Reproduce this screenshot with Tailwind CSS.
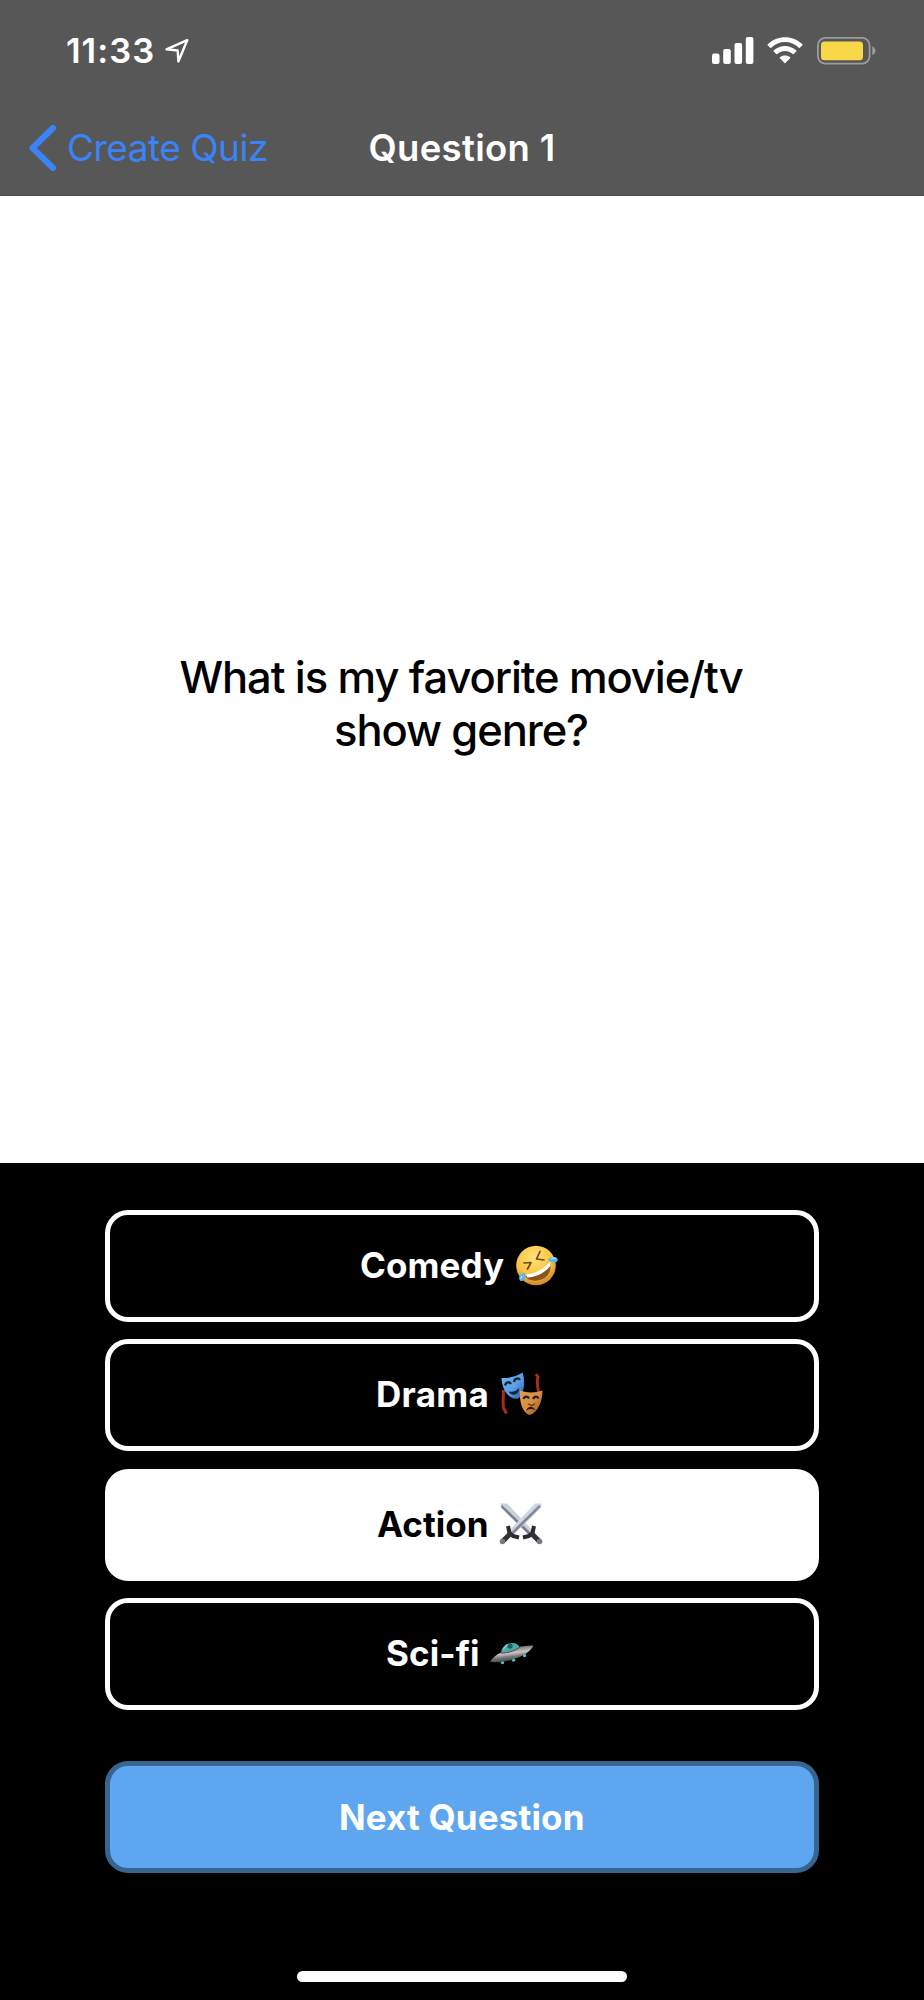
<!DOCTYPE html>
<html lang="en">
<head>
<meta charset="utf-8">
<title>Question 1</title>
<script src="https://cdn.jsdelivr.net/npm/@tailwindcss/browser@4"></script>
</head>
<body class="w-[924px] h-[2000px] overflow-hidden bg-black font-['Inter',sans-serif] text-white flex flex-col">
  <header class="h-[196px] shrink-0 bg-[#575757] border-b border-[#4b4b4b] flex flex-col">
    <div class="h-[101px] flex items-center justify-between pl-[66px] pr-[48px]">
      <div class="flex items-center gap-[11px]">
        <span class="w-[88px] whitespace-nowrap text-[34.5px] leading-[42px] font-semibold tracking-[1px]">11:33</span>
        <svg width="24" height="24" viewBox="0 0 24 24" fill="none" stroke="white" stroke-width="2.4" stroke-linejoin="round"><path d="M22.2 1.2 1.5 10.3 12.7 11.5 13.4 22.5Z"/></svg>
      </div>
      <div class="flex items-center">
        <svg width="42" height="28" viewBox="0 0 42 28" fill="white"><rect x="0" y="16.5" width="7.5" height="10.5" rx="2"/><rect x="11.2" y="12" width="7.6" height="15" rx="2"/><rect x="22.5" y="6" width="7.6" height="21" rx="2"/><rect x="33.8" y="0" width="7.6" height="27" rx="2"/></svg>
        <svg class="ml-[13px]" width="36" height="28" viewBox="0 0 36 28" fill="white"><path d="M.7 7.3C10.3-2.2 25.8-2.2 35.4 7.3q.5.5 0 1l-2.5 2.5q-.5.5-1 0C24 3.200 12 3.200 4.200 10.800q-.5.5-1 0L.7 8.300q-.5-.5 0-1Z"/><path d="M6.700 13.500c6.500-6 16-6 22.600 0q.5.5 0 1l-2.600 2.600q-.5.5-1 0c-4.400-4-11-4-15.400 0q-.5.500-1 0l-2.600-2.600q-.5-.5 0-1Z"/><path d="M12.900 20.200c3-2.400 7.200-2.400 10.200 0q.5.5 0 1l-4.600 4.900q-.5.500-1 0l-4.600-4.900q-.5-.5 0-1Z"/></svg>
        <svg class="ml-[14px]" width="59" height="28" viewBox="0 0 59 28"><rect x=".9" y=".9" width="51.700" height="25.800" rx="7.500" fill="none" stroke="#9c9c9c" stroke-width="1.800"/><rect x="4" y="4.500" width="42" height="18.800" rx="3.500" fill="#f8d748"/><path d="M55.300 9.300c4.200 2 4.200 7 0 9Z" fill="#9c9c9c"/></svg>
      </div>
    </div>
    <nav class="h-[94px] flex items-center">
      <div class="w-[342px] h-full pl-[28px] flex items-center text-[#3a84f8]">
        <svg width="29" height="48" viewBox="0 0 29 48" fill="none" stroke="currentColor" stroke-width="6" stroke-linecap="round" stroke-linejoin="round"><path d="M25 4 4.500 24 25 44"/></svg>
        <span class="ml-[10px] whitespace-nowrap text-[37px] leading-[46px] tracking-[-0.5px]">Create Quiz</span>
      </div>
      <h1 class="w-[240px] text-center whitespace-nowrap text-[36.5px] leading-[46px] font-semibold tracking-[0.3px]">Question 1</h1>
    </nav>
  </header>

  <main class="h-[967px] shrink-0 bg-white text-black flex items-center justify-center pt-[48px]">
    <p class="w-[600px] -ml-[2px] text-center text-[43.5px] leading-[53px] font-medium tracking-[-1.1px]">What is my favorite movie/tv<br>show genre?</p>
  </main>

  <section class="pt-[46.500px] pl-[105px] flex flex-col text-[35px] leading-[44px] font-bold">
    <div class="flex flex-col gap-[17.500px]">
      <button class="w-[713.500px] h-[112px] rounded-[23px] border-[5px] border-white flex items-center pl-[250px]">
        <span class="w-[146px] pb-[2px] text-left whitespace-nowrap tracking-[0.1px]">Comedy</span>
        <svg class="ml-[7px]" width="48" height="48" viewBox="0 0 48 48">
          <defs><radialGradient id="face" cx=".45" cy=".3" r=".75"><stop offset="0" stop-color="#ffe476"/><stop offset=".6" stop-color="#f7c247"/><stop offset="1" stop-color="#c97d22"/></radialGradient></defs>
          <circle cx="23" cy="23.500" r="19.800" fill="url(#face)"/>
          <path d="M12.500 34C22 33.500 31 28 37 21.500c2 8-3 15-10.500 16.600C20.500 39.500 14.500 38.500 12.500 34Z" fill="#8b551c"/>
          <path d="M13 32.500C22 32 31 27 36.800 20l.7 3.700C32 30.500 24 35 14.500 35.500Z" fill="#fff"/>
          <path d="m11 21 7-.5-3.500 6.500M27 9.500l-3.500 7.500 7.500 1" fill="none" stroke="#754413" stroke-width="1.700" stroke-linecap="round" stroke-linejoin="round"/>
          <path d="M35 18c2-4 8.500-3.500 9.700-1 .8 3.500-4.500 5.500-9.700 1ZM12 31c-4-.5-7.500 4.500-5 7.500 3 2 6.500-2 5-7.500Z" fill="#58b8ee"/>
          <path d="M38 17.200c2-1.500 4-1.300 5-.5M9 34c-1 1-1.300 2-1.100 3" stroke="#a7e2ff" stroke-width="1.300" fill="none"/>
        </svg>
      </button>
      <button class="w-[713.500px] h-[112px] rounded-[23px] border-[5px] border-white flex items-center pl-[266px]">
        <span class="w-[116px] pb-[2px] text-left whitespace-nowrap tracking-[0.3px]">Drama</span>
        <svg class="ml-[7px] -mt-[2px]" width="48" height="48" viewBox="0 0 48 48">
          <defs><linearGradient id="blue" x2="1" y2="1"><stop offset="0" stop-color="#6eb7f5"/><stop offset=".55" stop-color="#5a9fe8"/><stop offset="1" stop-color="#28579e"/></linearGradient><linearGradient id="gold" x2="1" y2="1"><stop offset="0" stop-color="#e89a4e"/><stop offset=".5" stop-color="#d98e40"/><stop offset="1" stop-color="#8a4e18"/></linearGradient></defs>
          <path d="M4.500 20c0 6-1 12 0 18l3 5.500M37 4l2 3c-2 6 1 13 .5 18" fill="none" stroke="#a82c18" stroke-width="3"/>
          <path d="M2.500 8C9 8.500 17 6.500 23.500 2.500c3 9 2 20-4 26C11 31 3 20.500 2.500 8Z" fill="url(#blue)"/>
          <path d="M21 20.500c7 2.500 15 2.500 22.500 0 0 10-4 22-13 24.500-7-2-10.500-14-9.500-24.500Z" fill="url(#gold)"/>
          <path d="M9.500 21.500c4.500 1 8.500-.5 10.500-3.500.5 7-7 9-10.500 3.500Z" fill="#12233b"/>
          <path d="M6 15.500c1-4 4.500-4 6-1.500M15 12c.5-4 4.500-4.500 6-2M24.500 29c1-3 4-3 5.500-.5M34 29c1.500-3 4.500-3 5.500-.5" stroke="#1a2433" stroke-width="2.300" fill="none"/>
          <path d="M27 41c2-5.500 7-5.500 9.500-.7-3-2-6.500-2-9.500.7Z" fill="#221915"/>
          <path d="M29 34l4 1.500 3-2" stroke="#55351f" stroke-width="1.300" fill="none"/>
        </svg>
      </button>
      <button class="w-[713.500px] h-[112px] rounded-[23px] border-[5px] border-white bg-white text-black flex items-center pl-[267px]">
        <span class="w-[114px] pb-[2px] text-left whitespace-nowrap tracking-[0px]">Action</span>
        <svg class="ml-[7px] -mt-[2px]" width="48" height="48" viewBox="0 0 48 48">
          <path d="M2.500 3.500H9L36 32l-4 4L3 8Z" fill="#c3d2df"/><path d="m3 7 29 29 2-2L4 5Z" fill="#817b82"/>
          <path d="M43.500 3.500H37L10 32l4 4L43 8Z" fill="#c8dae8"/><path d="m43 6.500-29 29-2-2L41 5Z" fill="#8d858c"/>
          <path d="m10 26 1.500 7 3.500 3 6 1.500M36 26l-1.500 7-3.500 3-6 1.500" fill="none" stroke="#292a2d" stroke-width="4"/>
          <path d="m13 33-8 8M33 33l8 8" stroke="#303237" stroke-width="5"/>
          <circle cx="4.500" cy="41.500" r="2.800" fill="#777980"/><circle cx="41.500" cy="41.500" r="2.800" fill="#777980"/>
        </svg>
      </button>
      <button class="w-[713.500px] h-[112px] rounded-[23px] border-[5px] border-white flex items-center pl-[276px]">
        <span class="w-[94px] pb-[2px] text-left whitespace-nowrap tracking-[0.100px]">Sci-fi</span>
        <svg class="ml-[9px] mt-[3px]" width="48" height="48" viewBox="0 0 48 48">
          <defs><linearGradient id="hull" x1=".35" y1="0" x2=".65" y2="1"><stop offset=".1" stop-color="#666"/><stop offset=".45" stop-color="#c8c8c8"/><stop offset=".65" stop-color="#777"/><stop offset="1" stop-color="#333"/></linearGradient></defs>
          <g fill="#4ac9c3"><circle cx="13.500" cy="30.500" r="1.700"/><circle cx="24.500" cy="28" r="1.800"/><circle cx="35.500" cy="23.500" r="1.700"/></g>
          <path d="M1 29.500c4-5 9-9 17-11.500 9-3 18-4.500 26.500-4.500C42 19 34 24.500 25 27 16 30 6 31 1 29.500Z" fill="url(#hull)"/>
          <path d="M12 20.500c1-6 5-9 10-9.500 4-.5 7 1 8.500 4-3 3-13 6.500-18.500 5.500Z" fill="#49aaa9"/>
          <circle cx="21" cy="14" r="2.700" fill="#245b65"/><path d="M14 17.500c2-3 3-4 5-5" stroke="#84dfda" stroke-width="1.200" fill="none"/>
          <path d="M11.500 21c6 .5 14-2 19-5.500" fill="none" stroke="#753535" stroke-width="1"/>
        </svg>
      </button>
    </div>
    <button class="mt-[51px] w-[713.500px] h-[112px] rounded-[23px] border-[5px] border-[#38658f] bg-[#5ea7f0] text-center whitespace-nowrap pb-[1px] tracking-[0.150px]">Next Question</button>
  </section>
  <div class="mt-[98px] ml-[297px] w-[330px] h-[11px] rounded-full bg-white shrink-0"></div>
</body>
</html>
